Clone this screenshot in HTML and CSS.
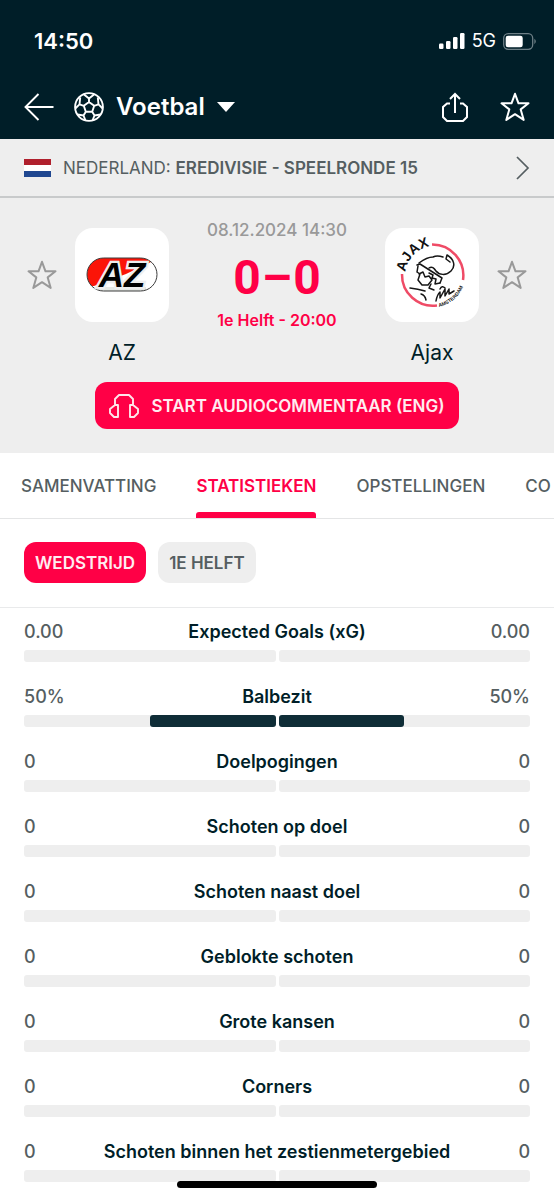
FILE: index.html
```html
<!DOCTYPE html>
<html lang="nl">
<head>
<meta charset="utf-8">
<meta name="viewport" content="width=device-width, initial-scale=1">
<title>AZ - Ajax</title>
<link rel="stylesheet" href="styles.css">
</head>
<body>
<svg width="0" height="0" class="defs" aria-hidden="true">
  <symbol id="star" viewBox="0 0 30 30"><path d="M15 1.8 18.5 11.3H28.5L20.7 17.4 23.7 27.9 15 22.2 6.3 27.9 9.3 17.4 1.5 11.3H11.5Z" fill="none" stroke="currentColor" stroke-width="2" stroke-linejoin="round"/></symbol>
</svg>

<header class="top">
  <div class="status">
    <span class="clock">14:50</span>
    <div class="status-icons">
      <svg width="26" height="16" viewBox="0 0 26 16" fill="#fff"><rect x="0" y="10.500" width="4.500" height="5.500" rx="1.200"/><rect x="7" y="8" width="4.500" height="8" rx="1.200"/><rect x="14" y="4" width="4.500" height="12" rx="1.200"/><rect x="21" y="0" width="4.500" height="16" rx="1.200"/></svg>
      <span>5G</span>
      <svg width="34" height="17" viewBox="0 0 34 17"><rect x=".7" y=".7" width="29" height="15.600" rx="4.500" fill="none" stroke="#6d7f86" stroke-width="1.300"/><rect x="2.700" y="2.700" width="17" height="11.600" rx="2.300" fill="#fff"/><path d="M31.500 5.800q2.300 2.700 0 5.400z" fill="#8b999e"/></svg>
    </div>
  </div>
  <nav class="nav">
    <button class="icon-btn" aria-label="Terug"><svg width="30" height="28" viewBox="0 0 30 28" fill="none" stroke="#fff" stroke-width="1.900"><path d="M29.500 14H1.500M14.500 1 1.500 14l13 13"/></svg></button>
    <button class="sport">
      <svg width="30" height="30" viewBox="0 0 30 30" fill="none" stroke="#fff" stroke-width="1.900" stroke-linejoin="round"><circle cx="15" cy="15" r="13.900"/><path d="M15 10 20.200 13.800 18.200 19.800H11.800L9.800 13.800ZM15 10V6.500M20.200 13.800 24.500 12.300M18.200 19.800 20.500 23.500M11.800 19.800 9.500 23.500M9.800 13.800 5.500 12.300M10 2.400 15 6.500 20 2.400M23.800 5.300 24.500 12.300 28.700 16.500M26.500 22.500 20.500 23.500 18.500 28.500M11.500 28.500 9.500 23.500 3.500 22.500M1.300 16.500 5.500 12.300 6.200 5.300"/></svg>
      <span>Voetbal</span>
      <svg width="18" height="10" viewBox="0 0 18 10"><path d="M0 0h18L9 10z" fill="#fff"/></svg>
    </button>
    <button class="icon-btn push" aria-label="Delen"><svg width="28" height="30" viewBox="0 0 28 30" fill="none" stroke="#fff" stroke-width="2"><path d="M9 11.500H6L2 15V25L6 29H22L26 25V15L22 11.500H19"/><path d="M14 21V2M9 7l5-5 5 5"/></svg></button>
    <button class="icon-btn" aria-label="Favoriet"><svg width="30" height="30"><use href="#star"/></svg></button>
  </nav>
</header>

<a class="league" href="#">
  <svg width="27" height="18" viewBox="0 0 27 18"><path fill="#fff" d="M0 0h27v18H0z"/><path fill="#b0202d" d="M0 0h27v6H0z"/><path fill="#1f4790" d="M0 12h27v6H0z"/></svg>
  <span class="league-name">NEDERLAND: <b>EREDIVISIE - SPEELRONDE 15</b></span>
  <svg width="14" height="24" viewBox="0 0 14 24" fill="none" stroke="#555e61" stroke-width="1.700"><path d="m1 1 11 11L1 23"/></svg>
</a>

<section class="match">
  <div class="versus">
    <button class="icon-btn fav" aria-label="AZ volgen"><svg width="30" height="30"><use href="#star"/></svg></button>
    <div class="team">
      <div class="crest">
        <svg width="94" height="94" viewBox="-11 -29 94 94">
          <clipPath id="pill"><rect x="1" y="1" width="70" height="33" rx="16.500"/></clipPath>
          <g clip-path="url(#pill)"><path fill="#fff" d="M0 0h72v36H0z"/><path fill="#fb1408" d="M0 0H62L65 5 40 17 8 29H0z"/><path fill="#e4e8e4" d="M12 30h48v5H12z"/></g>
          <rect x="1" y="1" width="70" height="33" rx="16.500" fill="none" stroke="#3c3c3c" stroke-width="1"/>
          <g class="az" font-size="35" text-anchor="middle" stroke-linejoin="miter"><text x="36" y="30" stroke="#eee" stroke-width="4.600" fill="#000" paint-order="stroke">AZ</text></g>
        </svg>
      </div>
      <span class="team-name">AZ</span>
    </div>
    <div class="result">
      <time>08.12.2024 14:30</time>
      <div class="score"><span>0</span><span>–</span><span>0</span></div>
      <span class="phase">1e Helft - 20:00</span>
    </div>
    <div class="team">
      <div class="crest">
        <svg width="94" height="94" viewBox="0 0 94 94" fill="none">
          <g stroke="#ef4b66" stroke-width="2.500"><path d="M47 16.500A31 31 0 0 1 78 52"/><path d="M17 46A31 31 0 0 0 52 77.500"/></g>
          <path id="arc-top" d="M20.500 44A31 31 0 0 1 50 17.500"/>
          <path id="arc-low" d="M54 79A34 34 0 0 0 80 52"/>
          <text class="ajax" font-size="14"><textPath href="#arc-top">AJAX</textPath></text>
          <text class="ajax" font-size="5"><textPath href="#arc-low">AMSTERDAM</textPath></text>
          <g stroke="#161616" stroke-width="1.500" stroke-linecap="round" stroke-linejoin="round">
            <path d="M34 35Q42 29 48 29 52 27 58 29M62 27C69 31 71 38 66 43 61 48 54 47 51 43 49 40 47 38 44 40M62 27 61 31 65 34"/>
            <path d="M32 37 35 36 57 50 55 55"/>
            <path d="M33 38 32 44 35 46 33 52 37 57H43L47 52 44 48 40 49 38 44 34 46M44 45 48 47 47 50 51 51 50 56 55 55"/>
            <path d="M25 60Q33 61 40 63M36 66Q40 67 41 72M46 56 44 60 49 62M51 73Q52 67 55 64V70L60 61V68L64 61V66L69 63M55 61Q57 57 60 60"/>
          </g>
        </svg>
      </div>
      <span class="team-name">Ajax</span>
    </div>
    <button class="icon-btn fav" aria-label="Ajax volgen"><svg width="30" height="30"><use href="#star"/></svg></button>
  </div>
  <button class="audio">
    <svg width="30" height="24" viewBox="0 0 30 24" fill="none" stroke="#ffe4ea" stroke-width="1.900" stroke-linejoin="round"><path d="M6 11V5L10 1H20L24 5V11M9 11H6L1 15V19L5 23H9ZM21 11H24L29 15V19L25 23H21Z"/></svg>
    <span>START AUDIOCOMMENTAAR (ENG)</span>
  </button>
</section>

<nav class="tabs">
  <a href="#">SAMENVATTING</a>
  <a href="#" class="active" aria-current="page">STATISTIEKEN</a>
  <a href="#">OPSTELLINGEN</a>
  <a href="#">CO</a>
</nav>

<div class="periods">
  <button class="active">WEDSTRIJD</button>
  <button>1E HELFT</button>
</div>

<main class="stats">
  <div class="stat"><span>0.00</span><b>Expected Goals (xG)</b><span>0.00</span><i></i><i></i></div>
  <div class="stat"><span>50%</span><b>Balbezit</b><span>50%</span><i><em style="width:50%"></em></i><i><em style="width:50%"></em></i></div>
  <div class="stat"><span>0</span><b>Doelpogingen</b><span>0</span><i></i><i></i></div>
  <div class="stat"><span>0</span><b>Schoten op doel</b><span>0</span><i></i><i></i></div>
  <div class="stat"><span>0</span><b>Schoten naast doel</b><span>0</span><i></i><i></i></div>
  <div class="stat"><span>0</span><b>Geblokte schoten</b><span>0</span><i></i><i></i></div>
  <div class="stat"><span>0</span><b>Grote kansen</b><span>0</span><i></i><i></i></div>
  <div class="stat"><span>0</span><b>Corners</b><span>0</span><i></i><i></i></div>
  <div class="stat"><span>0</span><b>Schoten binnen het zestienmetergebied</b><span>0</span><i></i><i></i></div>
</main>
<div class="home-bar"></div>
</body>
</html>
```
FILE: styles.css
```css
* { box-sizing: border-box; }
body { margin: 0; background: #fff; color: #001e28; font-family: Inter, "Liberation Sans", sans-serif; font-size: 17px; line-height: 24px; }
button { margin: 0; padding: 0; border: 0; background: none; color: inherit; font: inherit; cursor: pointer; }
a { color: inherit; text-decoration: none; }
svg { display: block; flex: none; }
.defs { position: absolute; }

.top { background: #001e28; color: #fff; }
.status { display: flex; justify-content: space-between; align-items: center; height: 74px; padding: 8px 17px 0 34px; }
.clock { font-size: 22px; font-weight: 600; }
.status-icons { display: flex; align-items: center; gap: 7px; font-size: 18px; }
.nav { display: flex; align-items: center; height: 65px; padding: 0 24px; }
.icon-btn { display: flex; }
.sport { display: flex; align-items: center; gap: 12px; margin-left: 20px; font-size: 24px; font-weight: 600; }
.push { margin-left: auto; margin-right: 31px; }

.league { display: flex; align-items: center; gap: 12px; height: 59px; padding: 0 24px; background: #eee; color: #555e61; border-bottom: 2px solid #c8cacb; }
.league-name { flex: 1; white-space: nowrap; }
.league b { font-weight: 600; }

.match { display: flex; flex-direction: column; align-items: center; gap: 17px; padding: 20px 27px 24px; background: #eee; }
.versus { display: grid; grid-template-columns: 30px 94px 1fr 94px 30px; column-gap: 18px; width: 100%; }
.fav { align-self: start; margin-top: 42px; color: #999; }
.team { display: flex; flex-direction: column; align-items: center; gap: 19px; padding-top: 10px; }
.crest { display: flex; align-items: center; justify-content: center; width: 94px; height: 94px; border-radius: 18px; background: #fff; }
.az { font-family: "Liberation Sans", sans-serif; font-weight: 700; font-style: italic; }
.ajax { font-family: "Liberation Sans", sans-serif; font-weight: 700; fill: #111; }
.team-name { font-size: 21px; }
.result { display: flex; flex-direction: column; align-items: center; color: #ff0046; white-space: nowrap; }
.result time { color: #999; font-weight: 500; }
.score { display: flex; gap: 1px; padding-top: 6px; font: 700 48px/60px Roboto, sans-serif; }
.phase { font-size: 16px; font-weight: 600; }

.audio { display: flex; align-items: center; gap: 12px; height: 47px; padding: 0 14px; border-radius: 12px; background: #ff0046; color: #ffecf0; font-weight: 600; white-space: nowrap; }

.tabs { display: flex; gap: 40px; height: 66px; padding: 0 0 0 21px; overflow: hidden; border-bottom: 1px solid #e4e5e6; color: #555e61; font-weight: 500; }
.tabs a { display: flex; flex: none; align-items: center; }
.tabs .active { position: relative; color: #ff0046; font-weight: 600; }
.tabs .active::after { content: ""; position: absolute; left: 0; right: 0; bottom: 0; height: 6px; border-radius: 3px 3px 0 0; background: #ff0046; }

.periods { display: flex; gap: 12px; padding: 23px 24px 24px; border-bottom: 1px solid #e9eaeb; }
.periods button { height: 41px; padding: 0 11px; border-radius: 12px; background: #eee; color: #555e61; font-weight: 600; }
.periods .active { background: #ff0046; color: #ffecf0; }

.stats { display: flex; flex-direction: column; gap: 23px; padding: 12px 24px 18px; }
.stat { display: grid; grid-template-columns: repeat(2, 1fr); gap: 6px 3px; font-size: 18px; }
.stat span, .stat b { grid-row: 1; }
.stat span { grid-column: 1; color: #555e61; font-weight: 500; }
.stat span ~ span { grid-column: 2; text-align: right; }
.stat b { grid-column: 1 / 3; justify-self: center; font-weight: 600; }
.stat i { display: flex; justify-content: flex-end; height: 12px; border-radius: 3px; background: #eee; }
.stat i + i { justify-content: flex-start; }
.stat em { border-radius: 3px; background: #0f2d37; }

.home-bar { position: fixed; bottom: 12px; left: 50%; width: 36%; height: 7px; margin-left: -18%; border-radius: 4px; background: #000; }
```
